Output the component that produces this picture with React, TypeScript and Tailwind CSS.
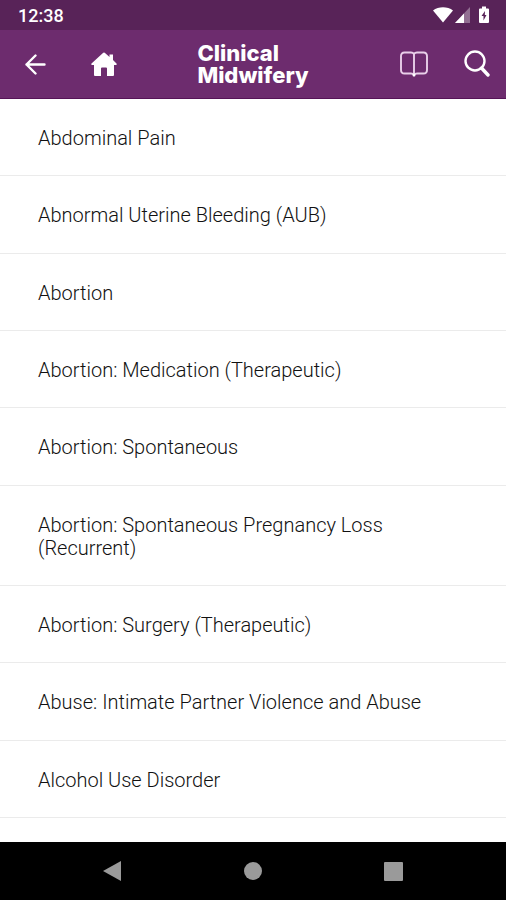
import React from "react";

const topics = [
  "Abdominal Pain",
  "Abnormal Uterine Bleeding (AUB)",
  "Abortion",
  "Abortion: Medication (Therapeutic)",
  "Abortion: Spontaneous",
  "Abortion: Spontaneous Pregnancy Loss (Recurrent)",
  "Abortion: Surgery (Therapeutic)",
  "Abuse: Intimate Partner Violence and Abuse",
  "Alcohol Use Disorder",
];

function StatusBar() {
  return (
    <div className="flex h-[30px] items-center justify-between bg-[#582358] pr-[17px] pl-[18px] text-white">
      <span className="pt-0.5 text-lg leading-5 font-medium">12:38</span>
      <div className="flex items-center">
        <svg width="20" height="16" viewBox="0 0 20 16" fill="currentColor" aria-hidden="true">
          <path d="M0 3.5C5.5-.7 14.5-.7 20 3.5L10 15.5Z" />
        </svg>
        <svg className="ml-0.5" width="15" height="16" viewBox="0 0 15 16" fill="currentColor" aria-hidden="true">
          <path d="M0 16L15 0V16Z" opacity=".35" />
          <path d="M0 16L9 6.4V16Z" />
        </svg>
        <svg className="ml-[9px]" width="10" height="18" viewBox="0 0 10 18" aria-hidden="true">
          <path d="M3 .5H7V2.5H9Q10 2.5 10 3.5V16Q10 17 9 17H1Q0 17 0 16V3.5Q0 2.5 1 2.5H3Z" fill="currentColor" />
          <path d="M6 5L2.5 10H4.5V14.5L7.5 9H5.8Z" fill="#582358" />
        </svg>
      </div>
    </div>
  );
}

function Header() {
  return (
    <header className="grid h-[69px] grid-cols-[1fr_auto_1fr] items-center border-b border-[#561457] bg-[#6d2c6e] px-4 text-white">
      <div className="flex items-center gap-[35px]">
        <button type="button" aria-label="Back" className="flex size-10 items-center justify-center">
          <svg width="22" height="22" viewBox="0 0 22 22" fill="none" stroke="currentColor" strokeWidth="2.4" strokeLinecap="round" strokeLinejoin="round" aria-hidden="true">
            <path d="M19.500 11.500H1.500M10.500 2.500L1.500 11.500L10.500 20.500" />
          </svg>
        </button>
        <button type="button" aria-label="Home">
          <svg width="26" height="24" viewBox="0 0 26 24" fill="currentColor" aria-hidden="true">
            <path d="M13 .5Q13.7 .5 14.3 1.2L18.5 5V2.500H22V8L25.5 11.5Q26.2 12.7 25 13H23V23Q23 24 22 24H16V16.500Q16 15.500 15 15.500H11Q10 15.500 10 16.500V24H4Q3 24 3 23V13H1Q-.2 12.7 .5 11.5L11.7 1.2Q12.3 .5 13 .5Z" />
          </svg>
        </button>
      </div>
      <h1 className="font-['Inter',sans-serif] text-[22px] leading-[22px] font-extrabold">
        Clinical
        <br />
        Midwifery
      </h1>
      <div className="flex items-center justify-end gap-9">
        <button type="button" aria-label="Contents">
          <svg width="28" height="26" viewBox="0 0 28 26" fill="none" stroke="#e9cfe9" strokeWidth="1.9" aria-hidden="true">
            <path d="M14 3Q13 1.5 11 1.5H4.5Q1 1.5 1 5V19Q1 22.5 4.5 22.5H11Q13 22.5 14 24Q15 22.5 17 22.5H23.5Q27 22.5 27 19V5Q27 1.5 23.5 1.5H17Q15 1.5 14 3V24" />
            <circle cx="14" cy="24" r="1.5" fill="white" stroke="none" />
          </svg>
        </button>
        <button type="button" aria-label="Search">
          <svg width="26" height="28" viewBox="0 0 26 28" fill="none" stroke="currentColor" aria-hidden="true">
            <circle cx="11" cy="11" r="9.5" strokeWidth="2.4" />
            <path d="M17.5 18L24 25" strokeWidth="3.4" strokeLinecap="round" />
          </svg>
        </button>
      </div>
    </header>
  );
}

export default function App() {
  return (
    <div className="flex min-h-screen flex-col bg-white font-['Roboto',sans-serif]">
      <StatusBar />
      <Header />
      <main className="flex flex-1 flex-col pb-6">
        <ul className="flex flex-1 flex-col">
          {topics.map((topic) => (
            <li key={topic} className="flex grow items-center border-b border-[#ebebeb]">
              <a href="#" className="block w-full px-[38px] pt-7 pb-[25px] text-xl leading-[23px] font-light text-[#111]">
                {topic}
              </a>
            </li>
          ))}
        </ul>
      </main>
      <nav aria-label="System" className="grid h-[58px] grid-cols-3 items-center bg-black px-[42px] text-[#9a9a9a]">
        <button type="button" aria-label="System back" className="flex justify-center">
          <svg width="20" height="22" viewBox="0 0 20 22" fill="currentColor" aria-hidden="true">
            <path d="M19 1V21L1 11Z" />
          </svg>
        </button>
        <button type="button" aria-label="System home" className="flex justify-center">
          <span className="size-[18px] rounded-full bg-current" />
        </button>
        <button type="button" aria-label="Recent apps" className="flex justify-center">
          <span className="size-[19px] rounded-[1px] bg-current" />
        </button>
      </nav>
    </div>
  );
}
